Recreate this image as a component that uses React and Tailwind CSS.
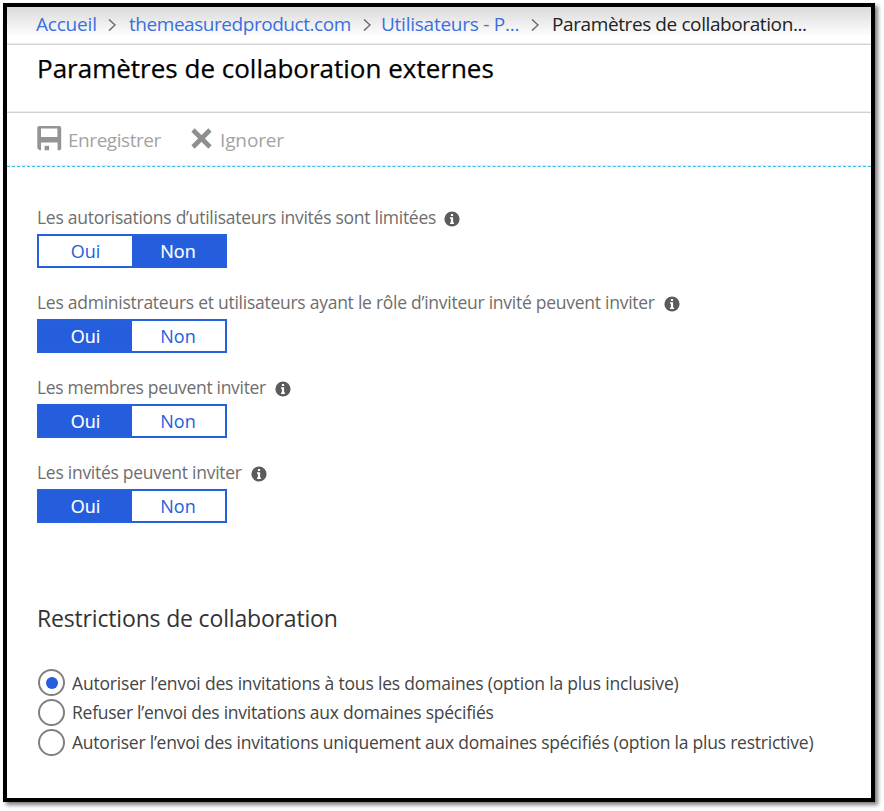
const SETTINGS = [
  { label: 'Les autorisations d’utilisateurs invités sont limitées', value: false, gap: 'gap-[8px] tracking-[-0.27px]' },
  { label: 'Les administrateurs et utilisateurs ayant le rôle d’inviteur invité peuvent inviter', value: true, gap: 'gap-[9px] tracking-[-0.26px]' },
  { label: 'Les membres peuvent inviter', value: true, gap: 'gap-[9px] tracking-[-0.32px]' },
  { label: 'Les invités peuvent inviter', value: true, gap: 'gap-[9px] tracking-[-0.27px]' },
];

const OPTIONS = [
  { label: 'Autoriser l’envoi des invitations à tous les domaines (option la plus inclusive)', checked: true, tracking: 'tracking-[-0.18px]' },
  { label: 'Refuser l’envoi des invitations aux domaines spécifiés', checked: false, tracking: 'tracking-[-0.25px]' },
  { label: 'Autoriser l’envoi des invitations uniquement aux domaines spécifiés (option la plus restrictive)', checked: false, tracking: 'tracking-[-0.23px]' },
];

function Chevron({ className = '' }) {
  return (
    <svg className={`h-[12px] w-[8px] shrink-0 ${className}`} viewBox="0 0 8 12" fill="none" stroke="#6b6b6b" strokeWidth="1.4">
      <path d="M1 0.4 7 6 1 11.6" />
    </svg>
  );
}

function InfoIcon() {
  return (
    <svg className="mt-[3px] size-[16px] shrink-0" viewBox="0 0 16 16">
      <circle cx="8" cy="8" r="7.6" fill="#5c5c5c" />
      <path d="M6.9 3h2.2v2H6.9zM6 6.3h3.1v5.3H10V13H6v-1.4h0.9V7.7H6z" fill="#fff" />
    </svg>
  );
}

function SaveIcon() {
  return (
    <svg className="-mt-[2px] size-[25px] shrink-0" viewBox="0 0 25 25" fill="#949494">
      <path
        fillRule="evenodd"
        d="M1.5 0h21.5l1.2 1.5V23l-1.2 1.3h-2.4v-7.8H4v7.8H2.6L0.3 22.3V1.5zM4 2.6v8.3h16.4V2.6z"
      />
      <path d="M7.6 19.8h4.5v4.5H7.6z" />
    </svg>
  );
}

function CloseIcon() {
  return (
    <svg className="-mt-[2px] size-[21px] shrink-0" viewBox="0 0 21 21" fill="none" stroke="#8f8f8f" strokeWidth="4.6">
      <path d="M2 2 19 19M19 2 2 19" />
    </svg>
  );
}

function Toggle({ value }) {
  const on = 'bg-[#245edc] text-white [-webkit-text-stroke:0.2px_white]';
  const off = 'bg-white text-[#245edc]';
  return (
    <div className="flex h-[34px] w-[190px] border-2 border-[#2560dd] text-[18px] leading-[31px]">
      <div className={`w-[93px] text-center ${value ? on : off}`}>Oui</div>
      <div className={`flex-1 pr-px text-center ${value ? off : on}`}>Non</div>
    </div>
  );
}

export default function App() {
  return (
    <div className="h-[811px] w-[884px] overflow-hidden bg-white pl-[3px] pt-[3px] font-['Open_Sans','Noto_Sans',sans-serif]">
      <main className="h-[799px] w-[872px] whitespace-nowrap border-4 border-black bg-white shadow-[3px_3px_4px_rgba(0,0,0,0.5)]">
        <nav className="flex h-[38px] items-center border-b border-[#d2d2d2] bg-linear-to-b from-[#dadada] to-white to-80% pb-[2px] pl-[29px] text-[19px] text-[#3a6fe0] shadow-[inset_0_-1px_0_#ececec]">
          <a className="w-[72px] tracking-[-0.2px]">Accueil</a>
          <Chevron />
          <a className="ml-[13px] w-[234px] tracking-[-0.45px]">themeasuredproduct.com</a>
          <Chevron />
          <a className="ml-[10px] w-[150px] tracking-[-0.25px]">Utilisateurs - P...</a>
          <Chevron />
          <span className="ml-[13px] tracking-[-0.4px] text-[#222]">Paramètres de collaboration...</span>
        </nav>
        <header className="h-[68px] border-b border-[#d2d2d2] pl-[30px] pt-[5px] shadow-[inset_0_-1px_0_#ececec]">
          <h1 className="text-[26px] leading-[36px] text-black [-webkit-text-stroke:0.25px_black]">Paramètres de collaboration externes</h1>
        </header>
        <div className="flex h-[54px] items-center border-b border-dashed border-[#3fb8ea] pl-[30px] text-[19px] text-[#a3a3a3] shadow-[inset_0_-1px_0_#d9f1fb]">
          <SaveIcon />
          <span className="ml-[6px] w-[123px] pt-[2px] tracking-[-0.45px]">Enregistrer</span>
          <CloseIcon />
          <span className="ml-[8px] pt-[2px] tracking-[-0.13px]">Ignorer</span>
        </div>
        <section className="flex flex-col gap-[17px] pl-[30px] pt-[33px]">
          {SETTINGS.map((s) => (
            <div key={s.label}>
              <div className={`flex h-[34px] items-center text-[17.5px] leading-[34px] text-[#6e6e6e] ${s.gap}`}>
                <span>{s.label}</span>
                <InfoIcon />
              </div>
              <Toggle value={s.value} />
            </div>
          ))}
        </section>
        <section className="pl-[30px] pt-[79px]">
          <h2 className="text-[23px] leading-[32px] tracking-[-0.17px] text-[#333]">Restrictions de collaboration</h2>
          <div className="pt-[34px]">
            {OPTIONS.map((o) => (
              <label key={o.label} className="flex h-[29.7px] items-center gap-[7px] pl-[1px] text-[17.5px] text-[#444]">
                <span className="flex size-[27px] shrink-0 items-center justify-center rounded-full border-2 border-[#808080]">
                  {o.checked && <span className="size-[12px] rounded-full bg-[#245edc]" />}
                </span>
                <span className={o.tracking}>{o.label}</span>
              </label>
            ))}
          </div>
        </section>
      </main>
    </div>
  );
}
